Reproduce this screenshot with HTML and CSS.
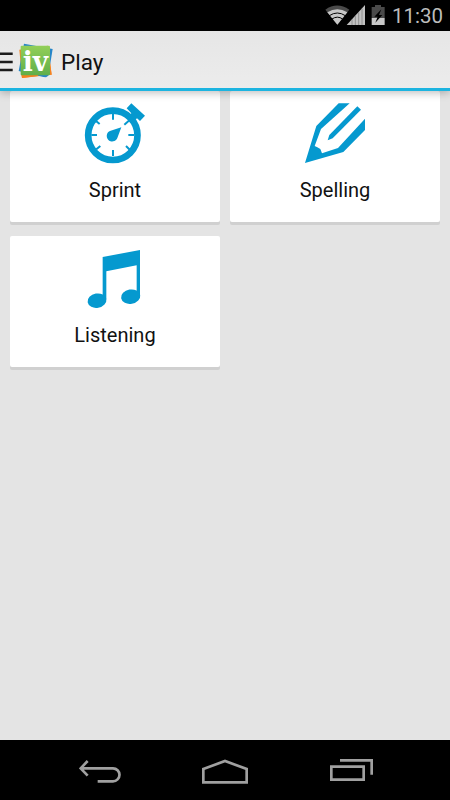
FILE: index.html
```
<!DOCTYPE html>
<html lang="en">
<head>
    <meta charset="UTF-8">
    <meta name="viewport" content="width=device-width, initial-scale=1.0">
    <title>Play</title>
    <link rel="stylesheet" href="styles.css">
</head>
<body>
    <div class="status-bar">
        <svg width="72" height="31" viewBox="0 0 216 93">
            <!-- wifi -->
            <path fill="#4a4a4a" d="M16 29Q51 4 88 29L52 74Z"/>
            <path fill="#c8c8c8" d="M22 37Q52 19 82 37L52 74Z"/>
            <path fill="none" stroke="#000" stroke-width="3" d="M28 47Q52 31 76 47M36 57Q52 46 68 57"/>
            <!-- signal -->
            <path fill="#c0c0c0" d="M80 75L135 15V75Z"/>
            <path stroke="#777" stroke-width="2" d="M96 58V75M106 47V75M116 37V75M126 26V75"/>
            <!-- battery -->
            <path fill="#4a4a4a" d="M165 15H183V21H194V54H155V21H165Z"/>
            <path fill="#c8c8c8" d="M155 54H194V75H155Z"/>
            <path fill="#000" d="M184 28L163 50H173L166 68L187 45H177Z"/>
        </svg>
        <span class="clock">11:30</span>
    </div>

    <div class="action-bar">
        <svg class="drawer" width="13" height="20" viewBox="0 0 13 20">
            <path stroke="#1c1c1c" stroke-width="2.6" d="M0 1.8H12.7M0 10H12.7M0 18H12.7"/>
        </svg>
        <svg class="logo" width="36" height="36" viewBox="0 0 108 108">
            <defs>
                <linearGradient id="green" x1="0" y1="0" x2="0" y2="1">
                    <stop offset="0" stop-color="#92cf58"/>
                    <stop offset="1" stop-color="#60ae49"/>
                </linearGradient>
            </defs>
            <path fill="#f58220" d="M4 20L90 8L101 95L12 105Z"/>
            <path fill="#2786c8" d="M18 2L104 18L91 98L84 103L76 102L2 84Z"/>
            <path fill="#f58220" d="M96 60L101 95H92ZM9 90L12 105L60 99V90Z"/>
            <rect fill="url(#green)" x="8" y="8" width="88" height="89" rx="3"/>
            <text class="logo-text" x="52" y="84" textLength="76" lengthAdjust="spacingAndGlyphs">iv</text>
        </svg>
        <h1>Play</h1>
    </div>

    <div class="main">
        <div class="card">
            <svg width="80" height="80" viewBox="0 0 240 240">
                <circle cx="113.500" cy="130" r="74" fill="none" stroke="#0599cf" stroke-width="20"/>
                <path stroke="#0599cf" stroke-width="6" d="M114 66V83M114 174V192M49 129H66M160 129H177M62 86L74 96M148 98L164 84M64 172L76 162M153 162L165 174"/>
                <path fill="#0599cf" d="M139 106L127 138A16.500 16.500 0 1 1 107 116Z"/>
                <path fill="#0599cf" d="M169 34L210 71L195 87L186 79L174 90L158 75L169 64L155 49Z"/>
            </svg>
            <span>Sprint</span>
        </div>
        <div class="card">
            <svg width="80" height="80" viewBox="0 0 240 240">
                <path fill="#0599cf" d="M131 34H164L78 111L59 162L67 166L76 171L81 184L129 168L210 80V114L145 180L30 213L64 102Z"/>
                <path fill="#0599cf" d="M187 43L198 53L113 139L98 145L103 129Z"/>
            </svg>
            <span>Spelling</span>
        </div>
        <div class="card">
            <svg width="80" height="80" viewBox="0 -9 240 240">
                <path fill="#0599cf" d="M83 51L195 30V166H185V76L94 94V178H83Z"/>
                <ellipse cx="66" cy="182" rx="28.500" ry="21.500" transform="rotate(-10 66 182)" fill="#0599cf"/>
                <ellipse cx="167" cy="170" rx="29" ry="21.500" transform="rotate(-10 167 170)" fill="#0599cf"/>
            </svg>
            <span>Listening</span>
        </div>
    </div>

    <div class="nav">
        <svg width="42" height="24" viewBox="0 0 126 72">
            <path d="M26 6L5 28L26 50M6 28H102A19 19 0 0 1 102 67H56"/>
        </svg>
        <svg width="46" height="25" viewBox="0 0 138 75">
            <path d="M4 30L69 6L134 30V70H4Z"/>
        </svg>
        <svg width="43" height="22" viewBox="0 0 129 66">
            <path d="M4 23H101V62H4ZM30 4H125V47"/>
        </svg>
    </div>
</body>
</html>
```

FILE: styles.css
```
body {
    display: flex;
    flex-direction: column;
    height: 800px;
    margin: 0;
    overflow: hidden;
    background-color: #e4e4e4;
    font-family: Roboto, sans-serif;
    color: #111;
}

svg {
    display: block;
    flex: none;
}

.status-bar {
    display: flex;
    justify-content: flex-end;
    height: 31px;
    padding-right: 8px;
    background-color: #000;
}

.clock {
    width: 50px;
    font-size: 20.5px;
    line-height: 33px;
    color: #bdbdbd;
}

.action-bar {
    position: relative;
    display: flex;
    align-items: center;
    box-sizing: border-box;
    height: 60px;
    border-bottom: 3px solid #1cb4e0;
    background: linear-gradient(#e6e6e6, #ececec);
    box-shadow: 0 2px 8px rgba(0, 0, 0, 0.25);
}

.drawer {
    margin-top: 4px;
}

.logo {
    margin: 3px 0 0 5px;
}

.logo-text {
    font-family: "DejaVu Serif", serif;
    font-size: 82px;
    font-weight: bold;
    text-anchor: middle;
    fill: #fff;
}

h1 {
    margin: 5px 0 0 7px;
    font-size: 22.5px;
    font-weight: normal;
}

.main {
    display: grid;
    grid-template-columns: 210px 210px;
    grid-auto-rows: 131px;
    gap: 14px 10px;
    flex: 1;
    padding: 0 10px;
}

.card {
    display: flex;
    flex-direction: column;
    align-items: center;
    box-sizing: border-box;
    padding-top: 1px;
    border-radius: 2px;
    background-color: #fff;
    box-shadow: 0 3px 0 #d0d0d0;
}

.card span {
    font-size: 20px;
    line-height: 36px;
}

.nav {
    display: flex;
    align-items: flex-start;
    box-sizing: border-box;
    height: 60px;
    padding: 19px 77px 0 79px;
    justify-content: space-between;
    background-color: #000;
}

.nav svg:nth-child(2) {
    margin-right: 2px;
}

.nav path {
    fill: none;
    stroke: #a0a0a0;
    stroke-width: 8;
}
```
